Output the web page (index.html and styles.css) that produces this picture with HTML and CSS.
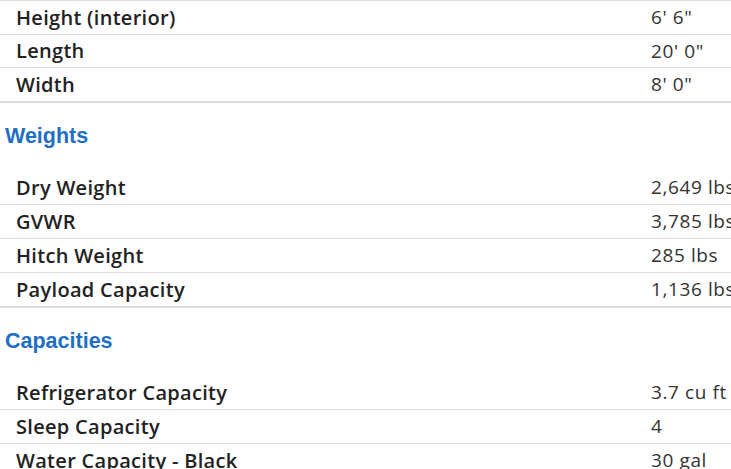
FILE: index.html
```html
<!DOCTYPE html>
<html>
<head>
<meta charset="utf-8">
<link rel="stylesheet" href="styles.css">
</head>
<body>
<div class="page">
  <div class="specs first">
    <div class="row"><span class="label">Height (interior)</span><span class="value">6' 6"</span></div>
    <div class="row"><span class="label">Length</span><span class="value">20' 0"</span></div>
    <div class="row last"><span class="label">Width</span><span class="value">8' 0"</span></div>
  </div>
  <h3 class="group">Weights</h3>
  <div class="specs">
    <div class="row"><span class="label">Dry Weight</span><span class="value">2,649 lbs</span></div>
    <div class="row"><span class="label">GVWR</span><span class="value">3,785 lbs</span></div>
    <div class="row"><span class="label">Hitch Weight</span><span class="value">285 lbs</span></div>
    <div class="row last"><span class="label">Payload Capacity</span><span class="value">1,136 lbs</span></div>
  </div>
  <h3 class="group">Capacities</h3>
  <div class="specs">
    <div class="row"><span class="label">Refrigerator Capacity</span><span class="value">3.7 cu ft</span></div>
    <div class="row"><span class="label">Sleep Capacity</span><span class="value">4</span></div>
    <div class="row"><span class="label">Water Capacity - Black</span><span class="value">30 gal</span></div>
  </div>
</div>
</body>
</html>
```
FILE: styles.css
```css
html, body {
  margin: 0;
  padding: 0;
  background: #fff;
  overflow: hidden;
}
.page {
  width: 800px;
}
.specs.first {
  border-top: 1px solid #ddd;
}
.row {
  display: grid;
  grid-template-columns: 651px 1fr;
  align-items: center;
  height: 33px;
  border-bottom: 1px solid #ddd;
  white-space: nowrap;
}
.specs.first .row {
  height: 32.5px;
}
.row.last {
  border-bottom: 2px solid #ddd;
}
.label {
  padding-left: 16px;
  font-family: "Open Sans", sans-serif;
  font-weight: 600;
  font-size: 20px;
  letter-spacing: 0.3px;
  color: #222;
}
.value {
  font-family: "Open Sans", sans-serif;
  font-size: 19px;
  letter-spacing: 0.6px;
  color: #333;
}
.group {
  margin: 0;
  height: 68px;
  display: flex;
  align-items: center;
  padding-left: 5px;
  font-family: "Liberation Sans", Arial, sans-serif;
  font-weight: bold;
  font-size: 21.5px;
  color: #1f6fc5;
}
```
